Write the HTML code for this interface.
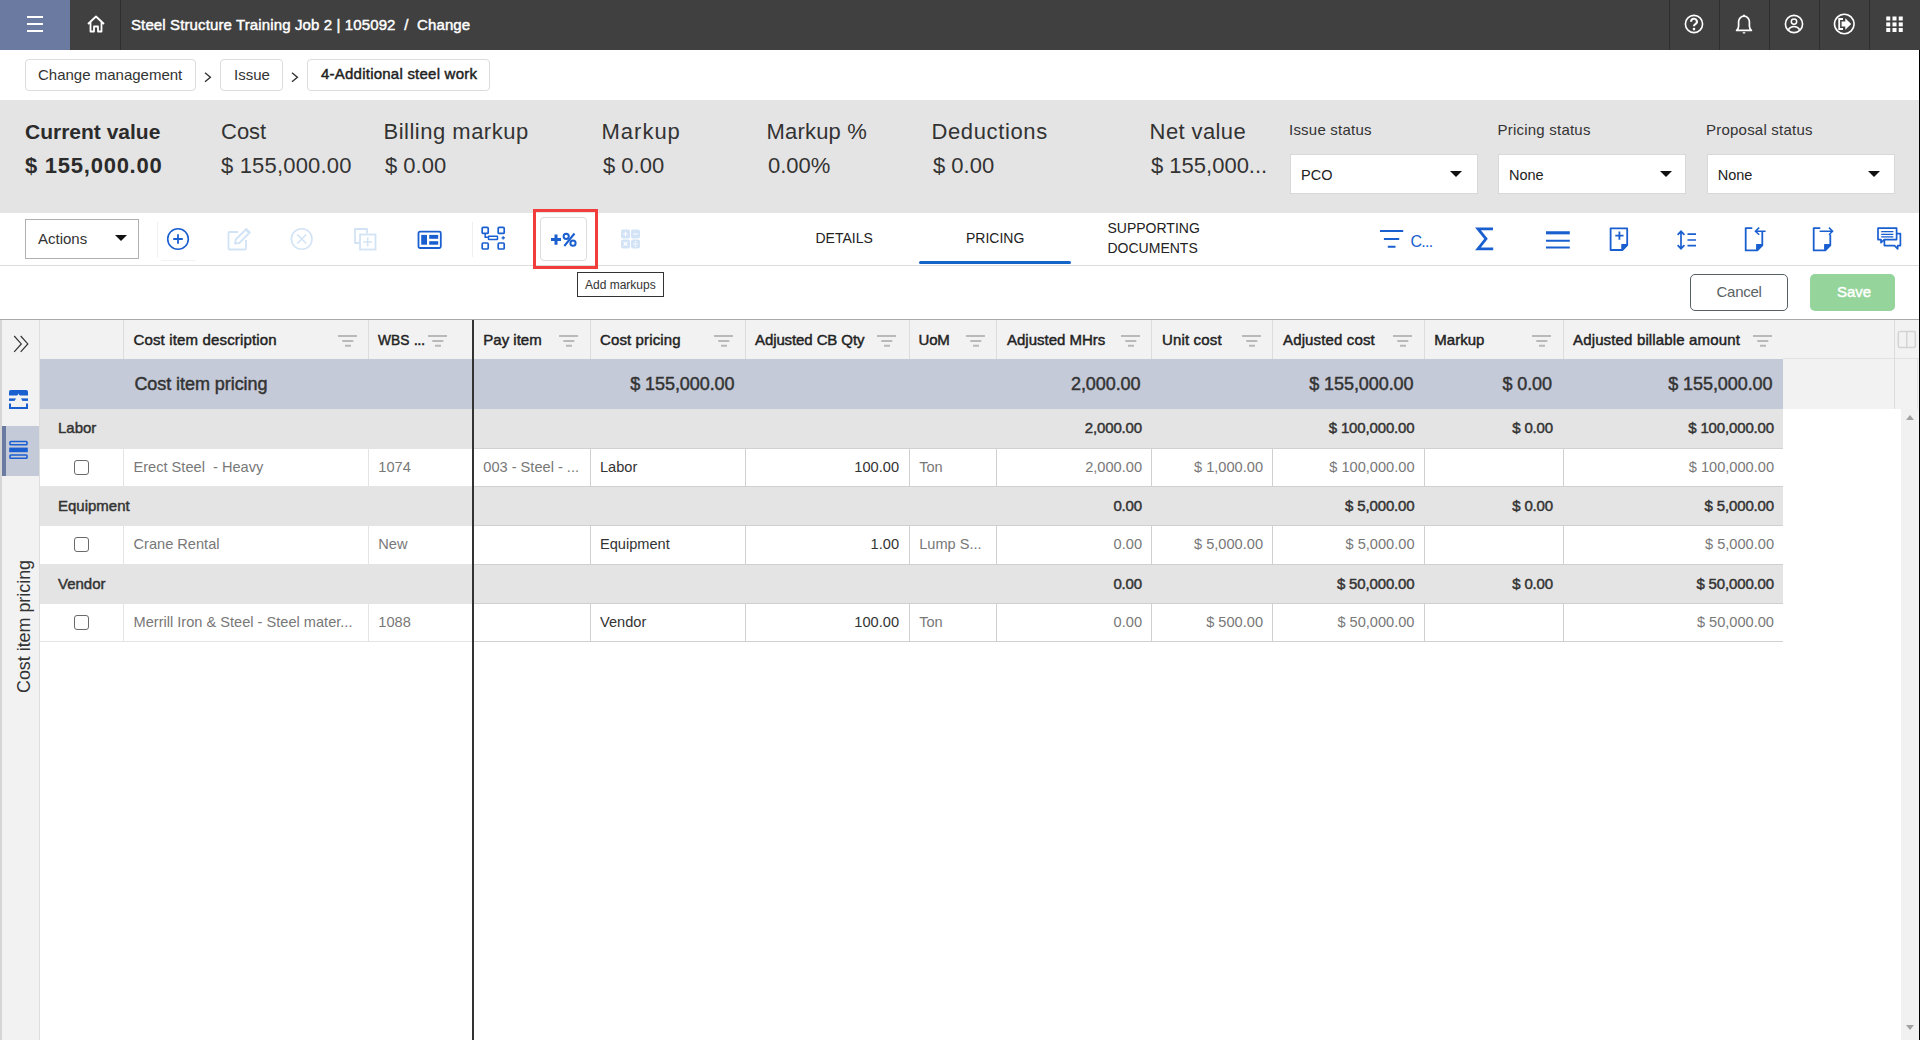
<!DOCTYPE html>
<html><head><meta charset="utf-8">
<style>
*{box-sizing:border-box;margin:0;padding:0}
html,body{width:1920px;height:1040px;overflow:hidden;background:#fff;font-family:"Liberation Sans",sans-serif;color:#333}
.a{position:absolute}
.t{position:absolute;white-space:nowrap;line-height:1}
svg{position:absolute;overflow:visible}
/* header */
#hdr{left:0;top:0;width:1920px;height:50px;background:#404040}
.hsep{top:0;width:1px;height:50px;background:#2e2e2e}
.bc{top:59px;height:31.6px;border:1px solid #dcdcdc;border-radius:4px;background:#fff}
.sumL{font-size:22px;color:#333}
.sumV{font-size:22px;color:#333}
.stl{font-size:15px;color:#333;letter-spacing:0.22px}
.dd{height:40px;background:#fff;border:1px solid #d8d8d8}
.ddtri{width:0;height:0;border-left:6px solid transparent;border-right:6px solid transparent;border-top:6px solid #111}
.tsep{width:1px;background:#efefef}
.tab{font-size:14px;color:#222}
.th{color:#222}
.med{font-weight:normal;-webkit-text-stroke:0.45px currentColor}
.vline{width:1px;background:#dcdcdc}
.hline{height:1px;background:#dcdcdc}
.grp{color:#333}
.cell{font-size:14px;color:#787878}
.cellD{font-size:14px;color:#333}
.cb{width:15px;height:15px;border:1.3px solid #6a6a6a;border-radius:3px;background:#fff}
</style></head><body>

<!-- HEADER -->
<div id="hdr" class="a"></div>
<div class="a" style="left:0;top:0;width:70px;height:50px;background:#6b7aa0"></div>
<div class="a" style="left:27px;top:16px;width:16px;height:2px;background:#fff"></div>
<div class="a" style="left:27px;top:23px;width:16px;height:2px;background:#fff"></div>
<div class="a" style="left:27px;top:30px;width:16px;height:2px;background:#fff"></div>
<div class="a hsep" style="left:120px"></div>
<svg style="left:86px;top:15px" width="20" height="18" viewBox="0 0 20 18"><path d="M2 9 L10 1.5 L18 9 M4.5 7 V16.5 H8 V11.5 H12 V16.5 H15.5 V7" fill="none" stroke="#fff" stroke-width="1.8" stroke-linejoin="round"/></svg>
<div class="t med" style="left:131px;top:17px;font-size:15px;color:#fff;letter-spacing:0.12px">Steel Structure Training Job 2 | 105092&nbsp; / &nbsp;Change</div>
<div class="a hsep" style="left:1669px"></div>
<div class="a hsep" style="left:1719px"></div>
<div class="a hsep" style="left:1769px"></div>
<div class="a hsep" style="left:1819px"></div>
<div class="a hsep" style="left:1869px"></div>

<svg style="left:1684px;top:14px" width="20" height="20" viewBox="0 0 20 20"><circle cx="10" cy="10" r="8.6" fill="none" stroke="#fff" stroke-width="1.6"/><path d="M7.1 7.7A2.9 2.9 0 1 1 11.4 10.2C10.5 10.7 10 11.2 10 12.3" fill="none" stroke="#fff" stroke-width="2.1"/><circle cx="10" cy="15.1" r="1.3" fill="#fff"/></svg>
<svg style="left:1734px;top:13px" width="20" height="22" viewBox="0 0 20 22"><path d="M2.6 17.4C3.9 16.3 4.6 14.9 4.6 13V8.6A5.4 5.4 0 0 1 15.4 8.6V13C15.4 14.9 16.1 16.3 17.4 17.4Z" fill="none" stroke="#fff" stroke-width="1.7" stroke-linejoin="round"/><path d="M8.2 19.2H11.8L10 21Z" fill="#fff"/><path d="M10 1.8V3.4" stroke="#fff" stroke-width="2"/></svg>
<svg style="left:1784px;top:14px" width="20" height="20" viewBox="0 0 20 20"><circle cx="10" cy="10" r="8.6" fill="none" stroke="#fff" stroke-width="1.6"/><circle cx="10" cy="7.6" r="2.7" fill="none" stroke="#fff" stroke-width="1.5"/><path d="M4.3 15.8C5.6 13.6 7.6 12.6 10 12.6S14.4 13.6 15.7 15.8" fill="none" stroke="#fff" stroke-width="1.5"/></svg>
<svg style="left:1833px;top:13px" width="23" height="22" viewBox="0 0 23 22"><circle cx="11.3" cy="11" r="9.8" fill="none" stroke="#fff" stroke-width="1.6"/><path d="M10 6H6.2V16H10" fill="none" stroke="#fff" stroke-width="1.8"/><path d="M8.6 8.6H12.3V5.3L18.2 11L12.3 16.7V13.4H8.6Z" fill="#fff"/></svg>
<svg style="left:1886px;top:16px" width="18" height="17" viewBox="0 0 18 17"><g fill="#fff"><rect x="0.25" y="0.5" width="4" height="4"/><rect x="6.5" y="0.5" width="4" height="4"/><rect x="12.75" y="0.5" width="4" height="4"/><rect x="0.25" y="6.4" width="4" height="4"/><rect x="6.5" y="6.4" width="4" height="4"/><rect x="12.75" y="6.4" width="4" height="4"/><rect x="0.25" y="12" width="4" height="4"/><rect x="6.5" y="12" width="4" height="4"/><rect x="12.75" y="12" width="4" height="4"/></g></svg>

<!-- BREADCRUMB -->
<svg style="left:203px;top:71px" width="10" height="12" viewBox="0 0 10 12"><path d="M2 1.8L7.4 6.3L2 10.8" fill="none" stroke="#333" stroke-width="1.4"/></svg>
<svg style="left:290px;top:71px" width="10" height="12" viewBox="0 0 10 12"><path d="M2 1.8L7.4 6.3L2 10.8" fill="none" stroke="#333" stroke-width="1.4"/></svg>

<div class="a bc" style="left:25px;width:171px"></div>
<div class="t" style="left:38px;top:67px;font-size:15px;color:#333">Change management</div>
<div class="a bc" style="left:220px;width:63px"></div>
<div class="t" style="left:234px;top:67px;font-size:15px;color:#333">Issue</div>
<div class="a bc" style="left:307px;width:183px"></div>
<div class="t med" style="left:321px;top:66.3px;font-size:15px;color:#222;letter-spacing:0.23px">4-Additional steel work</div>

<!-- SUMMARY -->
<div class="a" style="left:0;top:100px;width:1919px;height:113.4px;background:#e4e4e4"></div>
<div class="t" style="left:25px;top:121px;font-size:21px;font-weight:bold;color:#2b2b2b">Current value</div>
<div class="t" style="left:25px;top:155px;font-size:22px;font-weight:bold;color:#2b2b2b;letter-spacing:0.75px">$ 155,000.00</div>
<div class="t sumL" style="left:221px;top:120.5px">Cost</div>
<div class="t sumV" style="left:221px;top:155px;letter-spacing:0.18px">$ 155,000.00</div>
<div class="t sumL" style="left:383.5px;top:120.5px;letter-spacing:0.5px">Billing markup</div>
<div class="t sumV" style="left:385px;top:155px">$ 0.00</div>
<div class="t sumL" style="left:601.5px;top:120.5px;letter-spacing:1px">Markup</div>
<div class="t sumV" style="left:603px;top:155px">$ 0.00</div>
<div class="t sumL" style="left:766.5px;top:120.5px;letter-spacing:0.2px">Markup %</div>
<div class="t sumV" style="left:768px;top:155px">0.00%</div>
<div class="t sumL" style="left:931.5px;top:120.5px;letter-spacing:0.62px">Deductions</div>
<div class="t sumV" style="left:933px;top:155px">$ 0.00</div>
<div class="t sumL" style="left:1149.6px;top:120.5px;letter-spacing:0.4px">Net value</div>
<div class="t sumV" style="left:1151px;top:155px">$ 155,000...</div>
<div class="t stl" style="left:1289px;top:121.6px">Issue status</div>
<div class="a dd" style="left:1289.5px;top:154px;width:188.5px"></div>
<div class="t" style="left:1301px;top:168px;font-size:14.5px;color:#222">PCO</div>
<div class="a ddtri" style="left:1450px;top:171px"></div>
<div class="t stl" style="left:1497.5px;top:121.6px">Pricing status</div>
<div class="a dd" style="left:1497.5px;top:154px;width:188.5px"></div>
<div class="t" style="left:1509px;top:168px;font-size:14.5px;color:#222">None</div>
<div class="a ddtri" style="left:1660px;top:171px"></div>
<div class="t stl" style="left:1706px;top:121.6px">Proposal status</div>
<div class="a dd" style="left:1706.5px;top:154px;width:188px"></div>
<div class="t" style="left:1717.7px;top:168px;font-size:14.5px;color:#222">None</div>
<div class="a ddtri" style="left:1867.7px;top:171px"></div>

<!-- TOOLBAR -->
<div class="a" style="left:25px;top:219px;width:114px;height:40px;border:1px solid #b0b0b0;background:#fff"></div>
<div class="t" style="left:38px;top:231px;font-size:15px;color:#333">Actions</div>
<div class="a ddtri" style="left:114.5px;top:235px"></div>
<div class="a tsep" style="left:157px;top:222px;height:35px"></div>
<div class="a" style="left:161px;top:260px;width:35px;height:1px;background:#f2f2f2"></div>
<svg style="left:166px;top:227px" width="24" height="24" viewBox="0 0 24 24"><circle cx="12" cy="12" r="10.3" fill="none" stroke="#1a5fd0" stroke-width="1.6"/><path d="M12 7.2V16.8M7.2 12H16.8" stroke="#1a5fd0" stroke-width="1.8"/></svg>
<svg style="left:227px;top:227px" width="24" height="24" viewBox="0 0 24 24"><path d="M11 5H2.5a1 1 0 0 0-1 1V21.5a1 1 0 0 0 1 1H18a1 1 0 0 0 1-1V13" fill="none" stroke="#d3e3f6" stroke-width="1.8"/><path d="M8 16.5L8.8 12.5L19.3 2L22.8 5.5L12.3 16Z" fill="none" stroke="#d3e3f6" stroke-width="1.8" stroke-linejoin="round"/><path d="M18 3.3L21.5 6.8L22.8 5.5L19.3 2Z" fill="#d3e3f6"/></svg>
<svg style="left:290px;top:227px" width="24" height="24" viewBox="0 0 24 24"><circle cx="11.7" cy="12" r="10.3" fill="none" stroke="#d3e3f6" stroke-width="1.6"/><path d="M7.2 7.5L16.2 16.5M16.2 7.5L7.2 16.5" stroke="#d3e3f6" stroke-width="1.6"/></svg>
<svg style="left:353px;top:227px" width="24" height="24" viewBox="0 0 24 24"><path d="M14 6.5V2H2V16H6.5" fill="none" stroke="#d3e3f6" stroke-width="1.8" stroke-linejoin="round"/><rect x="7" y="7.5" width="15.5" height="15" fill="none" stroke="#d3e3f6" stroke-width="1.8"/><path d="M14.7 10.5V19.5M10.2 15H19.2" stroke="#d3e3f6" stroke-width="1.6"/></svg>
<svg style="left:417px;top:230px" width="25" height="20" viewBox="0 0 25 20"><rect x="1.5" y="1.7" width="22.3" height="16.3" rx="1.5" fill="none" stroke="#1a5fd0" stroke-width="1.8"/><rect x="4.2" y="4.9" width="5.8" height="9.8" fill="#1a5fd0"/><rect x="12.2" y="4.9" width="9" height="3.9" fill="#1a5fd0"/><rect x="12.2" y="11.2" width="9" height="3.5" fill="#1a5fd0"/></svg>
<div class="a tsep" style="left:472px;top:222px;height:35px"></div>
<svg style="left:480px;top:225px" width="27" height="26" viewBox="0 0 27 26"><rect x="2.2" y="2.4" width="6" height="6" rx="1" fill="none" stroke="#1a5fd0" stroke-width="1.7"/><rect x="18.2" y="2.4" width="6" height="6" rx="1" fill="none" stroke="#1a5fd0" stroke-width="1.7"/><rect x="2.2" y="18" width="6" height="6" rx="1" fill="none" stroke="#1a5fd0" stroke-width="1.7"/><rect x="18.2" y="18" width="6" height="6" rx="1" fill="none" stroke="#1a5fd0" stroke-width="1.7"/><path d="M5.2 8.4V12.3H8.5" fill="none" stroke="#1a5fd0" stroke-width="1.5"/><rect x="8.5" y="11.2" width="9" height="3.4" rx="0.5" fill="none" stroke="#1a5fd0" stroke-width="1.5"/><path d="M21.5 12.9H25M23.2 11.2V14.6" stroke="#1a5fd0" stroke-width="1.3"/></svg>
<div class="a" style="left:533px;top:209px;width:65px;height:60px;border:3px solid #f23d3d;z-index:3"></div>
<div class="a" style="left:540px;top:217px;width:47px;height:44px;border:1px solid #dcdcdc;border-radius:4px;background:#fff"></div>
<svg style="left:550px;top:232px" width="28" height="16" viewBox="0 0 28 16"><path d="M1 7.6H11M6 2.5V12.7" stroke="#1a5fd0" stroke-width="3"/><circle cx="16.2" cy="4.3" r="2.6" fill="none" stroke="#1a5fd0" stroke-width="2"/><circle cx="23" cy="11.2" r="2.6" fill="none" stroke="#1a5fd0" stroke-width="2"/><path d="M14.3 14L24.5 1.5" stroke="#1a5fd0" stroke-width="2"/></svg>
<svg style="left:620px;top:228px" width="22" height="22" viewBox="0 0 22 22"><rect x="1" y="1.5" width="9" height="9" rx="2" fill="#d3e3f6"/><rect x="11" y="1.5" width="9" height="9" rx="2" fill="#d3e3f6"/><rect x="1" y="11.5" width="9" height="9" rx="2" fill="#d3e3f6"/><rect x="11" y="11.5" width="9" height="9" rx="2" fill="#d3e3f6"/><path d="M3.3 6H7.7M5.5 3.8V8.2M13.3 6H17.7M3.6 13.9L7.4 17.7M7.4 13.9L3.6 17.7M13.3 16H17.7" stroke="#fff" stroke-width="1.2"/><circle cx="15.5" cy="13.8" r="0.8" fill="#fff"/><circle cx="15.5" cy="18.2" r="0.8" fill="#fff"/></svg>
<div class="t tab" style="left:815.5px;top:231px">DETAILS</div>
<div class="t tab" style="left:966px;top:231px">PRICING</div>
<div class="a" style="left:919px;top:260.5px;width:151.5px;height:3px;background:#1565c8;border-radius:1.5px"></div>
<div class="t tab" style="left:1107.5px;line-height:20px;top:217.7px">SUPPORTING<br>DOCUMENTS</div>
<svg style="left:1378px;top:228px" width="28" height="22" viewBox="0 0 28 22"><path d="M2 3H25.2M5.9 11H21.2M9.8 18.8H17.5" stroke="#1a5fd0" stroke-width="2"/></svg>
<div class="t" style="left:1410.5px;top:233.5px;font-size:16px;color:#1a5fd0;letter-spacing:-0.7px">C...</div>
<svg style="left:1474px;top:226px" width="22" height="26" viewBox="0 0 22 26"><path d="M19 2.9H4L12 12.8L4 22.9H19.2" fill="none" stroke="#1a5fd0" stroke-width="2.8" stroke-linejoin="miter"/></svg>
<svg style="left:1544px;top:229px" width="28" height="22" viewBox="0 0 28 22"><path d="M2 3.8H25.8" stroke="#1a5fd0" stroke-width="3.1"/><path d="M2 11.7H25.8M2 18.5H25.8" stroke="#1a5fd0" stroke-width="2"/></svg>
<svg style="left:1608px;top:226px" width="22" height="26" viewBox="0 0 22 26"><path d="M2.6 2.4H19.2V19.2L14.6 24H2.6Z" fill="none" stroke="#1a5fd0" stroke-width="1.8" stroke-linejoin="round"/><path d="M19.3 18.5L13.9 23.9V18.5Z" fill="#1a5fd0" stroke="#1a5fd0" stroke-width="1.2" stroke-linejoin="round"/><path d="M11.4 5.5V13.8M7.3 9.7H15.5" stroke="#1a5fd0" stroke-width="1.8"/></svg>
<svg style="left:1675px;top:229px" width="24" height="22" viewBox="0 0 24 22"><path d="M6 2.5V19.5M2.6 5.8L6 2.3L9.4 5.8M2.6 16.2L6 19.7L9.4 16.2" fill="none" stroke="#1a5fd0" stroke-width="1.7"/><path d="M12.5 5.2H21M12.5 11H21M12.5 16.7H21" stroke="#1a5fd0" stroke-width="1.7"/></svg>
<svg style="left:1743px;top:226px" width="26" height="26" viewBox="0 0 26 26"><path d="M9.3 2.1H2.7V24.4H14.3L19.3 19.4V10" fill="none" stroke="#1a5fd0" stroke-width="1.8" stroke-linejoin="round"/><path d="M19.4 18.7L13.7 24.4V18.7Z" fill="#1a5fd0" stroke="#1a5fd0" stroke-width="1.2" stroke-linejoin="round"/><path d="M22.6 5.2H12.6M16.2 1.6L12.4 5.2L16.2 8.8" fill="none" stroke="#1a5fd0" stroke-width="1.5"/><path d="M19.3 5.2V10" stroke="#1a5fd0" stroke-width="1.8"/></svg>
<svg style="left:1811px;top:226px" width="26" height="26" viewBox="0 0 26 26"><path d="M9.3 2.1H2.7V24.4H14.3L19.3 19.4V10" fill="none" stroke="#1a5fd0" stroke-width="1.8" stroke-linejoin="round"/><path d="M19.4 18.7L13.7 24.4V18.7Z" fill="#1a5fd0" stroke="#1a5fd0" stroke-width="1.2" stroke-linejoin="round"/><path d="M8.6 5.2H21.4M18 1.6L21.6 5.2L18 8.8" fill="none" stroke="#1a5fd0" stroke-width="1.5"/><path d="M19.3 8.5V10" stroke="#1a5fd0" stroke-width="1.8"/></svg>
<svg style="left:1876px;top:226px" width="27" height="25" viewBox="0 0 27 25"><path d="M2 2.2H20.6V13.6H8.4L5 16.6V13.6H2Z" fill="none" stroke="#1a5fd0" stroke-width="1.7" stroke-linejoin="round"/><path d="M5.2 5.6H17.4M5.2 8.3H17.4M5.2 10.9H17.4" stroke="#1a5fd0" stroke-width="1.3"/><path d="M20.6 7.7H24.4V19.6H21.7V22.8L18.5 19.6H8.4V13.6" fill="none" stroke="#1a5fd0" stroke-width="1.7" stroke-linejoin="round"/></svg>
<div class="a" style="left:0;top:265px;width:1919px;height:1px;background:#dcdcdc"></div>
<!-- tooltip -->
<div class="a" style="left:577px;top:272px;width:87px;height:25px;border:1px solid #333;background:#fff"></div>
<div class="t" style="left:585px;top:279px;font-size:12px;color:#333">Add markups</div>
<!-- buttons -->
<div class="a" style="left:1690px;top:274px;width:98px;height:37px;border:1px solid #566064;border-radius:5px;background:#fff"></div>
<div class="t" style="left:1716.5px;top:284px;font-size:15px;color:#5a6366;letter-spacing:-0.25px">Cancel</div>
<div class="a" style="left:1810px;top:274px;width:85px;height:37px;border-radius:5px;background:#95d49a"></div>
<div class="t med" style="left:1837px;top:284px;font-size:15px;color:#fff;letter-spacing:0px">Save</div>

<!-- TABLE -->
<div class="a" style="left:0;top:319px;width:1919px;height:1px;background:#a9a9a9"></div>
<div class="a" style="left:0;top:320px;width:2px;height:720px;background:#d6d6d6"></div>
<div class="a" style="left:2px;top:320px;width:37px;height:720px;background:#f2f2f2"></div>
<div class="a" style="left:39px;top:320px;width:1px;height:720px;background:#dedede"></div>
<div class="a" style="left:40px;top:320px;width:1879px;height:39px;background:#f2f2f2"></div>
<div class="a vline" style="left:123px;top:320px;height:39px"></div>
<div class="a vline" style="left:368px;top:320px;height:39px"></div>
<div class="a vline" style="left:590px;top:320px;height:39px"></div>
<div class="a vline" style="left:745px;top:320px;height:39px"></div>
<div class="a vline" style="left:909px;top:320px;height:39px"></div>
<div class="a vline" style="left:996px;top:320px;height:39px"></div>
<div class="a vline" style="left:1151px;top:320px;height:39px"></div>
<div class="a vline" style="left:1272px;top:320px;height:39px"></div>
<div class="a vline" style="left:1424px;top:320px;height:39px"></div>
<div class="a vline" style="left:1563px;top:320px;height:39px"></div>
<div class="a vline" style="left:1894px;top:320px;height:39px"></div>
<div class="t th med" style="left:133.4px;top:332.30px;font-size:15px;letter-spacing:0.16px">Cost item description</div>
<svg style="left:337.5px;top:334px" width="20" height="14" viewBox="0 0 20 14"><path d="M0 2H19M4.3 7H15.3M7 11.8H13" stroke="#b9b9b9" stroke-width="2"/></svg>
<div class="t th med" style="left:378.3px;top:332.30px;font-size:15px;letter-spacing:0;transform:scaleX(0.918);transform-origin:0 0">WBS</div>
<svg style="left:428px;top:334px" width="20" height="14" viewBox="0 0 20 14"><path d="M0 2H19M4.3 7H15.3M7 11.8H13" stroke="#b9b9b9" stroke-width="2"/></svg>
<div class="t th med" style="left:413.8px;top:332.30px;font-size:15px;letter-spacing:-0.6px">...</div>
<div class="t th med" style="left:483.3px;top:332.30px;font-size:15px;letter-spacing:0">Pay item</div>
<svg style="left:558.5px;top:334px" width="20" height="14" viewBox="0 0 20 14"><path d="M0 2H19M4.3 7H15.3M7 11.8H13" stroke="#b9b9b9" stroke-width="2"/></svg>
<div class="t th med" style="left:600px;top:332.30px;font-size:15px;letter-spacing:0.12px">Cost pricing</div>
<svg style="left:714px;top:334px" width="20" height="14" viewBox="0 0 20 14"><path d="M0 2H19M4.3 7H15.3M7 11.8H13" stroke="#b9b9b9" stroke-width="2"/></svg>
<div class="t th med" style="left:755px;top:332.30px;font-size:15px;letter-spacing:-0.1px">Adjusted CB Qty</div>
<svg style="left:877px;top:334px" width="20" height="14" viewBox="0 0 20 14"><path d="M0 2H19M4.3 7H15.3M7 11.8H13" stroke="#b9b9b9" stroke-width="2"/></svg>
<div class="t th med" style="left:918.6px;top:332.30px;font-size:15px;letter-spacing:-0.2px">UoM</div>
<svg style="left:966px;top:334px" width="20" height="14" viewBox="0 0 20 14"><path d="M0 2H19M4.3 7H15.3M7 11.8H13" stroke="#b9b9b9" stroke-width="2"/></svg>
<div class="t th med" style="left:1007px;top:332.30px;font-size:15px;letter-spacing:0">Adjusted MHrs</div>
<svg style="left:1121px;top:334px" width="20" height="14" viewBox="0 0 20 14"><path d="M0 2H19M4.3 7H15.3M7 11.8H13" stroke="#b9b9b9" stroke-width="2"/></svg>
<div class="t th med" style="left:1162px;top:332.30px;font-size:15px;letter-spacing:0.15px">Unit cost</div>
<svg style="left:1242px;top:334px" width="20" height="14" viewBox="0 0 20 14"><path d="M0 2H19M4.3 7H15.3M7 11.8H13" stroke="#b9b9b9" stroke-width="2"/></svg>
<div class="t th med" style="left:1283px;top:332.30px;font-size:15px;letter-spacing:0.14px">Adjusted cost</div>
<svg style="left:1393px;top:334px" width="20" height="14" viewBox="0 0 20 14"><path d="M0 2H19M4.3 7H15.3M7 11.8H13" stroke="#b9b9b9" stroke-width="2"/></svg>
<div class="t th med" style="left:1434.3px;top:332.30px;font-size:15px;letter-spacing:0">Markup</div>
<svg style="left:1532px;top:334px" width="20" height="14" viewBox="0 0 20 14"><path d="M0 2H19M4.3 7H15.3M7 11.8H13" stroke="#b9b9b9" stroke-width="2"/></svg>
<div class="t th med" style="left:1573px;top:332.30px;font-size:15px;letter-spacing:0.15px">Adjusted billable amount</div>
<svg style="left:1753px;top:334px" width="20" height="14" viewBox="0 0 20 14"><path d="M0 2H19M4.3 7H15.3M7 11.8H13" stroke="#b9b9b9" stroke-width="2"/></svg>
<svg style="left:1897px;top:330px" width="20" height="19" viewBox="0 0 20 19"><rect x="1.3" y="1.5" width="17" height="16" rx="1.5" fill="none" stroke="#d4d4d4" stroke-width="1.5"/><path d="M9.8 1.5V17.5" stroke="#d4d4d4" stroke-width="1.5"/></svg>
<div class="a" style="left:40px;top:359px;width:1743px;height:50px;background:#c5cad8"></div>
<div class="a" style="left:1783px;top:359px;width:136px;height:50px;background:#f2f2f2"></div>
<div class="a vline" style="left:1894px;top:359px;height:50px"></div>
<div class="a" style="left:1783px;top:358px;width:136px;height:1px;background:#e2e2e2"></div>
<div class="a" style="left:1917px;top:359px;width:1px;height:50px;background:#e2e2e2"></div>
<div class="t med" style="left:134.4px;top:374.76px;font-size:18px;color:#333;letter-spacing:-0.06px">Cost item pricing</div>
<div class="t med" style="right:1185.5px;top:374.76px;font-size:18px;color:#333;letter-spacing:-0.07px">$ 155,000.00</div>
<div class="t med" style="right:779.5px;top:374.76px;font-size:18px;color:#333;letter-spacing:-0.07px">2,000.00</div>
<div class="t med" style="right:506.5px;top:374.76px;font-size:18px;color:#333;letter-spacing:-0.07px">$ 155,000.00</div>
<div class="t med" style="right:368px;top:374.76px;font-size:18px;color:#333;letter-spacing:-0.07px">$ 0.00</div>
<div class="t med" style="right:147.5px;top:374.76px;font-size:18px;color:#333;letter-spacing:-0.07px">$ 155,000.00</div>
<div class="a" style="left:40px;top:409px;width:1743px;height:40px;background:#e4e4e4"></div>
<div class="a" style="left:474px;top:448px;width:1309px;height:1px;background:#d0d0d0"></div>
<div class="t grp med" style="left:58px;top:420.10px;font-size:15px;letter-spacing:0">Labor</div>
<div class="t grp med" style="right:778px;top:420.10px;font-size:15px;letter-spacing:-0.15px">2,000.00</div>
<div class="t grp med" style="right:505.5px;top:420.10px;font-size:15px;letter-spacing:-0.15px">$ 100,000.00</div>
<div class="t grp med" style="right:367px;top:420.10px;font-size:15px;letter-spacing:-0.15px">$ 0.00</div>
<div class="t grp med" style="right:146px;top:420.10px;font-size:15px;letter-spacing:-0.15px">$ 100,000.00</div>
<div class="a" style="left:40px;top:449px;width:1743px;height:38px;background:#fff"></div>
<div class="a" style="left:40px;top:486px;width:432px;height:1px;background:#e4e4e4"></div>
<div class="a" style="left:474px;top:486px;width:1309px;height:1px;background:#d0d0d0"></div>
<div class="a" style="left:123px;top:449px;width:1px;height:37px;background:#e4e4e4"></div>
<div class="a" style="left:368px;top:449px;width:1px;height:37px;background:#e4e4e4"></div>
<div class="a" style="left:590px;top:449px;width:1px;height:37px;background:#d0d0d0"></div>
<div class="a" style="left:745px;top:449px;width:1px;height:37px;background:#d0d0d0"></div>
<div class="a" style="left:909px;top:449px;width:1px;height:37px;background:#d0d0d0"></div>
<div class="a" style="left:996px;top:449px;width:1px;height:37px;background:#d0d0d0"></div>
<div class="a" style="left:1151px;top:449px;width:1px;height:37px;background:#d0d0d0"></div>
<div class="a" style="left:1272px;top:449px;width:1px;height:37px;background:#d0d0d0"></div>
<div class="a" style="left:1424px;top:449px;width:1px;height:37px;background:#d0d0d0"></div>
<div class="a" style="left:1563px;top:449px;width:1px;height:37px;background:#d0d0d0"></div>
<div class="a cb" style="left:74px;top:460.30px"></div>
<div class="t cell" style="left:133.5px;top:459.54px;font-size:14.6px;">Erect Steel&nbsp; - Heavy</div>
<div class="t cell" style="left:378.3px;top:459.54px;font-size:14.6px;">1074</div>
<div class="t cell" style="left:483.3px;top:459.54px;font-size:14.6px;">003 - Steel - ...</div>
<div class="t cellD" style="left:600px;top:459.54px;font-size:14.6px;">Labor</div>
<div class="t cellD" style="right:1021px;top:459.54px;font-size:14.6px;">100.00</div>
<div class="t cell" style="left:919.2px;top:459.54px;font-size:14.6px;">Ton</div>
<div class="t cell" style="right:778px;top:459.54px;font-size:14.6px;">2,000.00</div>
<div class="t cell" style="right:657px;top:459.54px;font-size:14.6px;">$ 1,000.00</div>
<div class="t cell" style="right:505.5px;top:459.54px;font-size:14.6px;">$ 100,000.00</div>
<div class="t cell" style="right:146px;top:459.54px;font-size:14.6px;">$ 100,000.00</div>
<div class="a" style="left:40px;top:487px;width:1743px;height:39px;background:#e4e4e4"></div>
<div class="a" style="left:474px;top:525px;width:1309px;height:1px;background:#d0d0d0"></div>
<div class="t grp med" style="left:58px;top:497.60px;font-size:15px;letter-spacing:0">Equipment</div>
<div class="t grp med" style="right:778px;top:497.60px;font-size:15px;letter-spacing:-0.15px">0.00</div>
<div class="t grp med" style="right:505.5px;top:497.60px;font-size:15px;letter-spacing:-0.15px">$ 5,000.00</div>
<div class="t grp med" style="right:367px;top:497.60px;font-size:15px;letter-spacing:-0.15px">$ 0.00</div>
<div class="t grp med" style="right:146px;top:497.60px;font-size:15px;letter-spacing:-0.15px">$ 5,000.00</div>
<div class="a" style="left:40px;top:526px;width:1743px;height:39px;background:#fff"></div>
<div class="a" style="left:40px;top:564px;width:432px;height:1px;background:#e4e4e4"></div>
<div class="a" style="left:474px;top:564px;width:1309px;height:1px;background:#d0d0d0"></div>
<div class="a" style="left:123px;top:526px;width:1px;height:38px;background:#e4e4e4"></div>
<div class="a" style="left:368px;top:526px;width:1px;height:38px;background:#e4e4e4"></div>
<div class="a" style="left:590px;top:526px;width:1px;height:38px;background:#d0d0d0"></div>
<div class="a" style="left:745px;top:526px;width:1px;height:38px;background:#d0d0d0"></div>
<div class="a" style="left:909px;top:526px;width:1px;height:38px;background:#d0d0d0"></div>
<div class="a" style="left:996px;top:526px;width:1px;height:38px;background:#d0d0d0"></div>
<div class="a" style="left:1151px;top:526px;width:1px;height:38px;background:#d0d0d0"></div>
<div class="a" style="left:1272px;top:526px;width:1px;height:38px;background:#d0d0d0"></div>
<div class="a" style="left:1424px;top:526px;width:1px;height:38px;background:#d0d0d0"></div>
<div class="a" style="left:1563px;top:526px;width:1px;height:38px;background:#d0d0d0"></div>
<div class="a cb" style="left:74px;top:537.30px"></div>
<div class="t cell" style="left:133.5px;top:537.04px;font-size:14.6px;">Crane Rental</div>
<div class="t cell" style="left:378.3px;top:537.04px;font-size:14.6px;">New</div>
<div class="t cell" style="left:483.3px;top:537.04px;font-size:14.6px;"></div>
<div class="t cellD" style="left:600px;top:537.04px;font-size:14.6px;">Equipment</div>
<div class="t cellD" style="right:1021px;top:537.04px;font-size:14.6px;">1.00</div>
<div class="t cell" style="left:919.2px;top:537.04px;font-size:14.6px;">Lump S...</div>
<div class="t cell" style="right:778px;top:537.04px;font-size:14.6px;">0.00</div>
<div class="t cell" style="right:657px;top:537.04px;font-size:14.6px;">$ 5,000.00</div>
<div class="t cell" style="right:505.5px;top:537.04px;font-size:14.6px;">$ 5,000.00</div>
<div class="t cell" style="right:146px;top:537.04px;font-size:14.6px;">$ 5,000.00</div>
<div class="a" style="left:40px;top:565px;width:1743px;height:39px;background:#e4e4e4"></div>
<div class="a" style="left:474px;top:603px;width:1309px;height:1px;background:#d0d0d0"></div>
<div class="t grp med" style="left:58px;top:575.60px;font-size:15px;letter-spacing:0">Vendor</div>
<div class="t grp med" style="right:778px;top:575.60px;font-size:15px;letter-spacing:-0.15px">0.00</div>
<div class="t grp med" style="right:505.5px;top:575.60px;font-size:15px;letter-spacing:-0.15px">$ 50,000.00</div>
<div class="t grp med" style="right:367px;top:575.60px;font-size:15px;letter-spacing:-0.15px">$ 0.00</div>
<div class="t grp med" style="right:146px;top:575.60px;font-size:15px;letter-spacing:-0.15px">$ 50,000.00</div>
<div class="a" style="left:40px;top:604px;width:1743px;height:38px;background:#fff"></div>
<div class="a" style="left:40px;top:641px;width:432px;height:1px;background:#e4e4e4"></div>
<div class="a" style="left:474px;top:641px;width:1309px;height:1px;background:#d0d0d0"></div>
<div class="a" style="left:123px;top:604px;width:1px;height:37px;background:#e4e4e4"></div>
<div class="a" style="left:368px;top:604px;width:1px;height:37px;background:#e4e4e4"></div>
<div class="a" style="left:590px;top:604px;width:1px;height:37px;background:#d0d0d0"></div>
<div class="a" style="left:745px;top:604px;width:1px;height:37px;background:#d0d0d0"></div>
<div class="a" style="left:909px;top:604px;width:1px;height:37px;background:#d0d0d0"></div>
<div class="a" style="left:996px;top:604px;width:1px;height:37px;background:#d0d0d0"></div>
<div class="a" style="left:1151px;top:604px;width:1px;height:37px;background:#d0d0d0"></div>
<div class="a" style="left:1272px;top:604px;width:1px;height:37px;background:#d0d0d0"></div>
<div class="a" style="left:1424px;top:604px;width:1px;height:37px;background:#d0d0d0"></div>
<div class="a" style="left:1563px;top:604px;width:1px;height:37px;background:#d0d0d0"></div>
<div class="a cb" style="left:74px;top:615.30px"></div>
<div class="t cell" style="left:133.5px;top:614.54px;font-size:14.6px;">Merrill Iron &amp; Steel - Steel mater...</div>
<div class="t cell" style="left:378.3px;top:614.54px;font-size:14.6px;">1088</div>
<div class="t cell" style="left:483.3px;top:614.54px;font-size:14.6px;"></div>
<div class="t cellD" style="left:600px;top:614.54px;font-size:14.6px;">Vendor</div>
<div class="t cellD" style="right:1021px;top:614.54px;font-size:14.6px;">100.00</div>
<div class="t cell" style="left:919.2px;top:614.54px;font-size:14.6px;">Ton</div>
<div class="t cell" style="right:778px;top:614.54px;font-size:14.6px;">0.00</div>
<div class="t cell" style="right:657px;top:614.54px;font-size:14.6px;">$ 500.00</div>
<div class="t cell" style="right:505.5px;top:614.54px;font-size:14.6px;">$ 50,000.00</div>
<div class="t cell" style="right:146px;top:614.54px;font-size:14.6px;">$ 50,000.00</div>
<div class="a" style="left:471.5px;top:320px;width:2.5px;height:720px;background:#333"></div>
<div class="a" style="left:1901px;top:409px;width:18px;height:631px;background:#f1f1f1"></div>
<div class="a" style="left:1905.5px;top:415px;width:0;height:0;border-left:4px solid transparent;border-right:4px solid transparent;border-bottom:5px solid #a3a3a3"></div>
<div class="a" style="left:1905.5px;top:1025px;width:0;height:0;border-left:4px solid transparent;border-right:4px solid transparent;border-top:5px solid #a3a3a3"></div>
<svg style="left:12px;top:334px" width="20" height="20" viewBox="0 0 20 20"><path d="M2.2 2L9.3 9.9L2.2 17.8M8.7 2L15.8 9.9L8.7 17.8" fill="none" stroke="#333" stroke-width="1.2"/></svg>
<svg style="left:9px;top:390px" width="19" height="20" viewBox="0 0 19 20"><path d="M0 5.6V1.8A1.8 1.8 0 0 1 1.8 0H17.2A1.8 1.8 0 0 1 19 1.8V5.6Z" fill="#1a5fd0"/><rect x="0" y="8.4" width="19" height="2.5" fill="#1a5fd0"/><path d="M1 13.4V18H18V13.4" fill="none" stroke="#1a5fd0" stroke-width="2"/><path d="M9.5 3.4L4 14H15Z" fill="#f2f2f2"/></svg>
<div class="a" style="left:2px;top:426px;width:37px;height:50px;background:#c5cad8"></div>
<div class="a" style="left:2px;top:426px;width:4px;height:50px;background:#6b7aa0"></div>
<svg style="left:8px;top:439px" width="22" height="22" viewBox="0 0 22 22"><rect x="2" y="2.5" width="17" height="3.3" rx="0.8" fill="none" stroke="#1a5fd0" stroke-width="1.6"/><rect x="1.2" y="8.6" width="18.6" height="4.6" fill="#1a5fd0"/><rect x="2" y="16" width="17" height="3.3" rx="0.8" fill="none" stroke="#1a5fd0" stroke-width="1.6"/></svg>
<div class="t" style="left:13.6px;top:693px;font-size:19px;color:#333;transform-origin:0 0;transform:rotate(-90deg) scaleX(0.94);">Cost item pricing</div>
<!-- right edge -->
<div class="a" style="left:1919px;top:50px;width:1px;height:990px;background:#000"></div>
</body></html>
